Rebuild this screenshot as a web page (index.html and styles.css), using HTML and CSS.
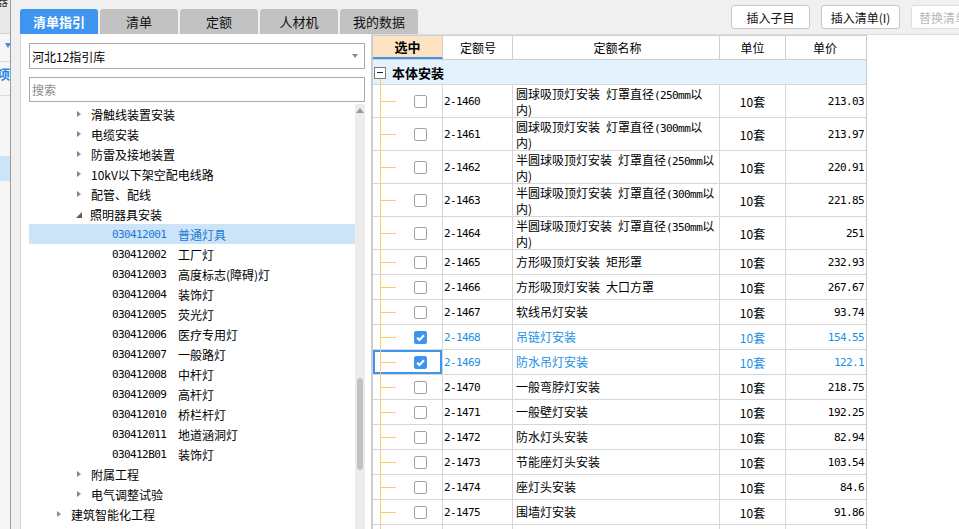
FILE: index.html
```html
<!DOCTYPE html>
<html lang="zh-CN">
<head>
<meta charset="utf-8">
<title>清单指引</title>
<link rel="stylesheet" href="styles.css">
</head>
<body>
<div class="app">
  <div class="strip">
    <div class="s-top"><span class="s-glyph">器</span></div>
    <div class="s-row1"><span class="s-tri"></span></div>
    <div class="s-row2"><span class="s-item">项</span></div>
    <div class="s-gap"></div>
    <div class="s-sel"></div>
    <div class="s-rest"></div>
  </div>
  <div class="main">
    <div class="topbar">
      <div class="tabs">
        <div class="tab active">清单指引</div>
        <div class="tab">清单</div>
        <div class="tab">定额</div>
        <div class="tab">人材机</div>
        <div class="tab">我的数据</div>
      </div>
      <div class="tools">
        <div class="btn">插入子目</div>
        <div class="btn">插入清单(I)</div>
        <div class="btn disabled">替换清单(R)</div>
      </div>
    </div>
    <div class="content">
      <div class="left">
        <div class="select"><span>河北12指引库</span><span class="caret"></span></div>
        <div class="search">搜索</div>
        <div class="tree-wrap">
          <div class="tree">
            <div class="node l2"><span class="tri"></span><span>滑触线装置安装</span></div>
            <div class="node l2"><span class="tri"></span><span>电缆安装</span></div>
            <div class="node l2"><span class="tri"></span><span>防雷及接地装置</span></div>
            <div class="node l2"><span class="tri"></span><span>10kV以下架空配电线路</span></div>
            <div class="node l2"><span class="tri"></span><span>配管、配线</span></div>
            <div class="node l2"><span class="tri open"></span><span>照明器具安装</span></div>
            <div class="node l3 sel"><span class="code">030412001</span><span>普通灯具</span></div>
            <div class="node l3"><span class="code">030412002</span><span>工厂灯</span></div>
            <div class="node l3"><span class="code">030412003</span><span>高度标志(障碍)灯</span></div>
            <div class="node l3"><span class="code">030412004</span><span>装饰灯</span></div>
            <div class="node l3"><span class="code">030412005</span><span>荧光灯</span></div>
            <div class="node l3"><span class="code">030412006</span><span>医疗专用灯</span></div>
            <div class="node l3"><span class="code">030412007</span><span>一般路灯</span></div>
            <div class="node l3"><span class="code">030412008</span><span>中杆灯</span></div>
            <div class="node l3"><span class="code">030412009</span><span>高杆灯</span></div>
            <div class="node l3"><span class="code">030412010</span><span>桥栏杆灯</span></div>
            <div class="node l3"><span class="code">030412011</span><span>地道涵洞灯</span></div>
            <div class="node l3"><span class="code">030412B01</span><span>装饰灯</span></div>
            <div class="node l2"><span class="tri"></span><span>附属工程</span></div>
            <div class="node l2"><span class="tri"></span><span>电气调整试验</span></div>
            <div class="node l1"><span class="tri"></span><span>建筑智能化工程</span></div>
            <div class="node l1"><span class="tri"></span><span>自动化控制仪表安装工程</span></div>
          </div>
          <div class="vscroll">
            <span class="up"></span>
            <span class="thumb"></span>
          </div>
        </div>
      </div>
      <div class="right">
        <div class="grid">
          <div class="row hdr">
            <div class="c c1 hsel">选中</div>
            <div class="c c2">定额号</div>
            <div class="c c3">定额名称</div>
            <div class="c c4">单位</div>
            <div class="c c5">单价</div>
          </div>
          <div class="row group"><span class="minus"></span><span class="gname">本体安装</span></div>
          <div class="row tall">
            <div class="c c1 chk"><span class="box"></span></div>
            <div class="c c2 num">2-1460</div>
            <div class="c c3 name">圆球吸顶灯安装&ensp;灯罩直径<span class="hw">(250mm</span>以<br>内)</div>
            <div class="c c4">10套</div>
            <div class="c c5 num">213.03</div>
          </div>
          <div class="row tall">
            <div class="c c1 chk"><span class="box"></span></div>
            <div class="c c2 num">2-1461</div>
            <div class="c c3 name">圆球吸顶灯安装&ensp;灯罩直径<span class="hw">(300mm</span>以<br>内)</div>
            <div class="c c4">10套</div>
            <div class="c c5 num">213.97</div>
          </div>
          <div class="row tall">
            <div class="c c1 chk"><span class="box"></span></div>
            <div class="c c2 num">2-1462</div>
            <div class="c c3 name">半圆球吸顶灯安装&ensp;灯罩直径<span class="hw">(250mm</span>以<br>内)</div>
            <div class="c c4">10套</div>
            <div class="c c5 num">220.91</div>
          </div>
          <div class="row tall">
            <div class="c c1 chk"><span class="box"></span></div>
            <div class="c c2 num">2-1463</div>
            <div class="c c3 name">半圆球吸顶灯安装&ensp;灯罩直径<span class="hw">(300mm</span>以<br>内)</div>
            <div class="c c4">10套</div>
            <div class="c c5 num">221.85</div>
          </div>
          <div class="row tall">
            <div class="c c1 chk"><span class="box"></span></div>
            <div class="c c2 num">2-1464</div>
            <div class="c c3 name">半圆球吸顶灯安装&ensp;灯罩直径<span class="hw">(350mm</span>以<br>内)</div>
            <div class="c c4">10套</div>
            <div class="c c5 num">251</div>
          </div>
          <div class="row">
            <div class="c c1 chk"><span class="box"></span></div>
            <div class="c c2 num">2-1465</div>
            <div class="c c3 name">方形吸顶灯安装&ensp;矩形罩</div>
            <div class="c c4">10套</div>
            <div class="c c5 num">232.93</div>
          </div>
          <div class="row">
            <div class="c c1 chk"><span class="box"></span></div>
            <div class="c c2 num">2-1466</div>
            <div class="c c3 name">方形吸顶灯安装&ensp;大口方罩</div>
            <div class="c c4">10套</div>
            <div class="c c5 num">267.67</div>
          </div>
          <div class="row">
            <div class="c c1 chk"><span class="box"></span></div>
            <div class="c c2 num">2-1467</div>
            <div class="c c3 name">软线吊灯安装</div>
            <div class="c c4">10套</div>
            <div class="c c5 num">93.74</div>
          </div>
          <div class="row checked">
            <div class="c c1 chk"><span class="box on"><svg viewBox="0 0 13 13" width="13" height="13"><path d="M3 6.8 L5.4 9 L10 4.2" fill="none" stroke="#fff" stroke-width="2"/></svg></span></div>
            <div class="c c2 num">2-1468</div>
            <div class="c c3 name">吊链灯安装</div>
            <div class="c c4">10套</div>
            <div class="c c5 num">154.55</div>
          </div>
          <div class="row checked">
            <div class="c c1 chk focus"><span class="box on"><svg viewBox="0 0 13 13" width="13" height="13"><path d="M3 6.8 L5.4 9 L10 4.2" fill="none" stroke="#fff" stroke-width="2"/></svg></span></div>
            <div class="c c2 num">2-1469</div>
            <div class="c c3 name">防水吊灯安装</div>
            <div class="c c4">10套</div>
            <div class="c c5 num">122.1</div>
          </div>
          <div class="row">
            <div class="c c1 chk"><span class="box"></span></div>
            <div class="c c2 num">2-1470</div>
            <div class="c c3 name">一般弯脖灯安装</div>
            <div class="c c4">10套</div>
            <div class="c c5 num">218.75</div>
          </div>
          <div class="row">
            <div class="c c1 chk"><span class="box"></span></div>
            <div class="c c2 num">2-1471</div>
            <div class="c c3 name">一般壁灯安装</div>
            <div class="c c4">10套</div>
            <div class="c c5 num">192.25</div>
          </div>
          <div class="row">
            <div class="c c1 chk"><span class="box"></span></div>
            <div class="c c2 num">2-1472</div>
            <div class="c c3 name">防水灯头安装</div>
            <div class="c c4">10套</div>
            <div class="c c5 num">82.94</div>
          </div>
          <div class="row">
            <div class="c c1 chk"><span class="box"></span></div>
            <div class="c c2 num">2-1473</div>
            <div class="c c3 name">节能座灯头安装</div>
            <div class="c c4">10套</div>
            <div class="c c5 num">103.54</div>
          </div>
          <div class="row">
            <div class="c c1 chk"><span class="box"></span></div>
            <div class="c c2 num">2-1474</div>
            <div class="c c3 name">座灯头安装</div>
            <div class="c c4">10套</div>
            <div class="c c5 num">84.6</div>
          </div>
          <div class="row">
            <div class="c c1 chk"><span class="box"></span></div>
            <div class="c c2 num">2-1475</div>
            <div class="c c3 name">围墙灯安装</div>
            <div class="c c4">10套</div>
            <div class="c c5 num">91.86</div>
          </div>
          <div class="row">
            <div class="c c1 chk"><span class="box"></span></div>
            <div class="c c2 num">2-1476</div>
            <div class="c c3 name">投光灯安装</div>
            <div class="c c4">10套</div>
            <div class="c c5 num">88.20</div>
          </div>
        </div>
      </div>
    </div>
  </div>
</div>
</body>
</html>
```

FILE: styles.css
```css
* { box-sizing: border-box; margin: 0; padding: 0; }
html, body { width: 959px; height: 529px; overflow: hidden; }
body {
  font-family: "Noto Sans CJK SC", "Liberation Sans", sans-serif;
  font-size: 12px;
  color: #000;
  background: #f0f0f0;
}
.app { display: flex; height: 529px; }

/* left strip */
.strip {
  width: 11px; flex-shrink: 0;
  border-right: 1px solid #9c9c9c;
  background: #f6f6f6;
  overflow: hidden;
  display: flex; flex-direction: column;
}
.s-top { height: 34px; background: #e9e9e9; border-bottom: 1px solid #d0d0d0; overflow: hidden; }
.s-glyph { display: block; font-size: 12px; line-height: 12px; margin-top: -5px; margin-left: -4px; color: #333; }
.s-row1 { height: 28px; border-bottom: 1px solid #dcdcdc; display: flex; align-items: center; justify-content: flex-end; }
.s-tri { width: 0; height: 0; border-top: 5px solid #3a8ee6; border-left: 3px solid transparent; border-right: 3px solid transparent; margin-right: -1px; margin-top: -4px; }
.s-row2 { height: 34px; border-bottom: 1px solid #dcdcdc; overflow: hidden; padding-top: 5px; }
.s-item { display: block; margin-left: -3px; font-weight: bold; color: #2a86e4; font-size: 13px; line-height: 14px; }
.s-gap { height: 60px; }
.s-sel { height: 25px; background: #cce4f7; }
.s-rest { flex: 1; }

/* main */
.main { flex: 1; display: flex; flex-direction: column; min-width: 0; padding-left: 9px; }
.topbar { height: 34px; display: flex; overflow: hidden; flex-shrink: 0; }
.tabs { display: flex; gap: 2px; margin-top: 9px; flex: 1; }
.tab {
  width: 78px; height: 25px;
  background: #c2c2c2;
  border-radius: 3px 3px 0 0;
  display: flex; align-items: center; justify-content: center;
  font-size: 13px; color: #111;
}
.tab.active { background: #3d95ef; color: #fff; font-weight: bold; }
.tools { width: 228px; flex-shrink: 0; display: flex; gap: 11px; padding-top: 5px; overflow: hidden; }
.btn {
  width: 79px; height: 24px; flex-shrink: 0;
  border: 1px solid #c6c6c6; border-radius: 3px;
  background: #fff;
  display: flex; align-items: center; justify-content: center;
  font-size: 12px; color: #111;
}
.btn.disabled { color: #b8b8b8; border-color: #dedede; justify-content: flex-start; padding-left: 7px; white-space: nowrap; }

.content { flex: 1; display: flex; min-height: 0; }

/* left panel */
.left {
  width: 351px; flex-shrink: 0;
  background: #fff;
  border-left: 1px solid #d8d8d8;
  padding: 9px 6px 0 8px;
  display: flex; flex-direction: column;
  overflow: hidden;
}
.select {
  height: 26px; border: 1px solid #a9a9a9;
  display: flex; align-items: center; justify-content: space-between;
  padding: 0 6px 0 2px;
  font-size: 12px;
}
.caret { width: 0; height: 0; border-top: 4px solid #8a8a8a; border-left: 3px solid transparent; border-right: 3px solid transparent; }
.search {
  height: 25px; margin-top: 8px;
  border: 1px solid #a9a9a9;
  display: flex; align-items: center; padding-left: 2px;
  color: #8c8c8c; font-size: 12px;
}
.tree-wrap { flex: 1; display: flex; margin-top: 2px; min-height: 0; }
.tree { flex: 1; overflow: hidden; }
.node { height: 20px; display: flex; align-items: center; white-space: nowrap; font-size: 12px; }
.node.l1 { padding-left: 28px; }
.node.l2 { padding-left: 48px; }
.node.l3 { padding-left: 83px; }
.node .tri {
  width: 0; height: 0; margin-right: 10px;
  border-left: 4px solid #8a8a8a;
  border-top: 3px solid transparent; border-bottom: 3px solid transparent;
}
.node .tri.open {
  border-left: 0; border-top: 6px solid transparent; border-bottom: 0;
  border-right: 6px solid #5c5c5c;
  margin-right: 8px; margin-left: -1px; margin-top: 1px;
}
.node .code { width: 66px; font-family: "DejaVu Sans Mono", "Liberation Mono", monospace; font-size: 11px; letter-spacing: -0.6px; }
.node.sel { background: #cce4f7; color: #1b78d8; }
.vscroll { width: 10px; background: #ececec; display: flex; flex-direction: column; align-items: center; }
.vscroll .up { margin-top: 4px; width: 0; height: 0; border-bottom: 5px solid #9a9a9a; border-left: 4px solid transparent; border-right: 4px solid transparent; }
.vscroll .thumb { width: 6px; height: 92px; margin-top: 265px; background: #c1c1c1; border-radius: 3px; }

/* right pane */
.right {
  flex: 1; background: #fff;
  border-left: 2px solid #cdcdcd;
  border-top: 1px solid #dcdcdc;
  overflow: hidden;
}
.grid { width: 494px; border-top: 1px solid #d0d0d0; border-right: 1px solid #c8c8c8; }
.row { display: flex; height: 25px; border-bottom: 1px solid #d6d6d6; }
.row.tall { height: 33px; }
.c {
  border-right: 1px solid #d6d6d6;
  display: flex; align-items: center;
  white-space: nowrap; overflow: hidden;
}
.c:last-child { border-right: 0; }
.c1 { width: 70px; }
.c2 { width: 70px; padding-left: 1px; }
.c3 { width: 207px; padding-left: 3px; }
.c4 { width: 66px; justify-content: center; }
.c5 { width: 80px; justify-content: flex-end; padding-right: 2px; }
.num { font-family: "DejaVu Sans Mono", "Liberation Mono", monospace; font-size: 11px; letter-spacing: -0.6px; }
.name { line-height: 14px; display: block; padding-top: 0; }
.row .name { display: flex; }
.row.tall .name { display: block; padding-top: 2px; }
.hw { font-family: "DejaVu Sans Mono", "Liberation Mono", monospace; font-size: 11px; letter-spacing: -0.6px; }

.row.hdr { height: 24px; border-bottom: 1px solid #cfcfcf; }
.hdr .c { justify-content: center; font-size: 12px; border-right-color: #cfcfcf; }
.hdr .hsel { background: #fde3c2; font-weight: bold; font-size: 13px; border-bottom: 2px solid #3d95ef; }

.row.group { background: #e4f2fd; align-items: center; padding-left: 1px; position: relative; }
.minus { width: 12px; height: 12px; border: 1px solid #7c7c7c; background: #fff; display: flex; align-items: center; justify-content: center; margin-top: 1px; }
.minus::before { content: ""; width: 6px; height: 1px; background: #222; }
.gname { margin-left: 6px; font-weight: bold; font-size: 13px; }
.row.group::after { content: ""; position: absolute; left: 7px; top: 19px; bottom: -1px; width: 1px; background: #ffc870; }

.chk { position: relative; padding-left: 41px; }
.chk::before { content: ""; position: absolute; left: 7px; top: 0; bottom: -1px; width: 1px; background: #ffc870; }
.chk::after { content: ""; position: absolute; left: 8px; top: 50%; width: 15px; height: 1px; background: #ffc870; }
.box { width: 13px; height: 13px; border: 1px solid #a2a2a2; border-radius: 2px; background: #fff; display: flex; }
.box.on { background: #3d95ef; border-color: #3d95ef; }
.box.on svg { margin: -1px; }
.chk.focus { box-shadow: inset 0 0 0 2px #3d95ef; }
.row.checked .c { color: #1a8fe3; }
```
